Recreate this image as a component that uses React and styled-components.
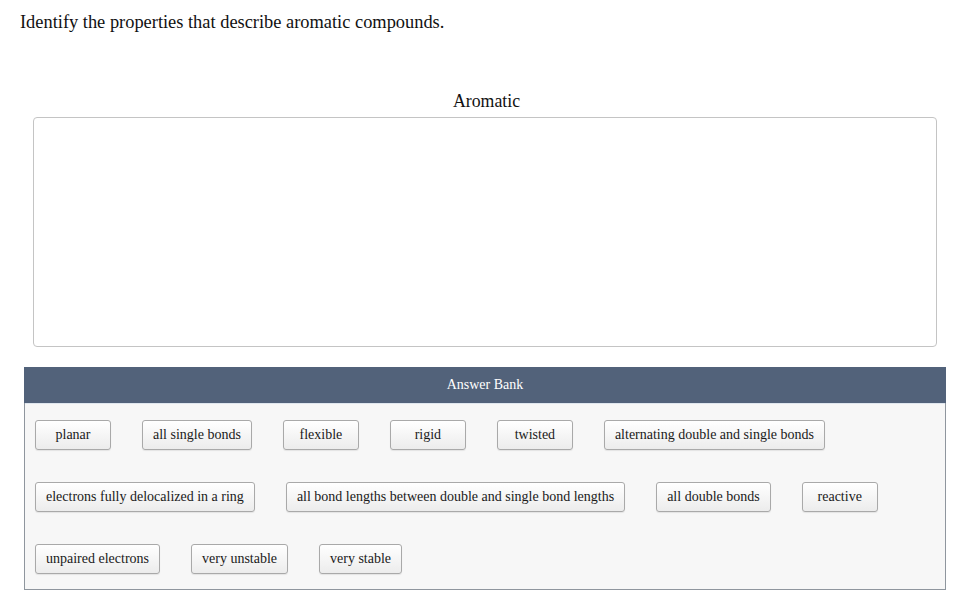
import React from 'react';
import styled, { createGlobalStyle } from 'styled-components';

const GlobalStyle = createGlobalStyle`
  html, body {
    margin: 0;
    padding: 0;
    background: #ffffff;
  }
  body {
    font-family: "Liberation Serif", "Times New Roman", serif;
    color: #111;
  }
`;

const Page = styled.div`
  width: 962px;
  padding: 11px 16px 0 20px;
  box-sizing: border-box;
`;

const Prompt = styled.p`
  margin: 0;
  font-size: 18.4px;
  line-height: 22px;
`;

const Category = styled.div`
  margin: 58px 9px 0 13px;
`;

const CategoryTitle = styled.div`
  text-align: center;
  font-size: 17.8px;
  line-height: 20px;
  margin-bottom: 6px;
  padding-left: 3px;
`;

const DropZone = styled.div`
  height: 228px;
  border: 1px solid #c4c4c4;
  border-radius: 4px;
  background: #fff;
`;

const Bank = styled.div`
  margin: 20px 0 0 4px;
  width: 922px;
  border: 1px solid #8f969e;
  border-top: none;
  box-sizing: border-box;
  background: #f7f7f7;
`;

const BankHeader = styled.div`
  height: 36px;
  background: #52627a;
  color: #fff;
  font-size: 14px;
  display: flex;
  align-items: center;
  justify-content: center;
  margin: 0 -1px;
`;

const BankBody = styled.div`
  display: flex;
  flex-direction: column;
  gap: 32px;
  padding: 16px 10px 15px;
  border-top: 1px solid #dfe6ee;
`;

const ChipRow = styled.div`
  display: flex;
  gap: 31px;
`;

const Chip = styled.button`
  height: 30px;
  min-width: 76px;
  padding: 0 10px;
  box-sizing: border-box;
  border: 1px solid #a9a9a9;
  border-radius: 3px;
  background: linear-gradient(#ffffff, #ececec);
  box-shadow: 0 1px 1px rgba(0, 0, 0, 0.08);
  font-family: "Liberation Serif", "Times New Roman", serif;
  font-size: 14px;
  color: #1a1a1a;
  white-space: nowrap;
  cursor: grab;
`;

const rows = [
  ['planar', 'all single bonds', 'flexible', 'rigid', 'twisted', 'alternating double and single bonds'],
  ['electrons fully delocalized in a ring', 'all bond lengths between double and single bond lengths', 'all double bonds', 'reactive'],
  ['unpaired electrons', 'very unstable', 'very stable'],
];

const App = () => {
  return (
    <>
      <GlobalStyle />
      <Page>
        <Prompt>Identify the properties that describe aromatic compounds.</Prompt>
        <Category>
          <CategoryTitle>Aromatic</CategoryTitle>
          <DropZone />
        </Category>
        <Bank>
          <BankHeader>Answer Bank</BankHeader>
          <BankBody>
            {rows.map((row, i) => (
              <ChipRow key={i}>
                {row.map(label => (
                  <Chip key={label}>{label}</Chip>
                ))}
              </ChipRow>
            ))}
          </BankBody>
        </Bank>
      </Page>
    </>
  );
};

export default App;
